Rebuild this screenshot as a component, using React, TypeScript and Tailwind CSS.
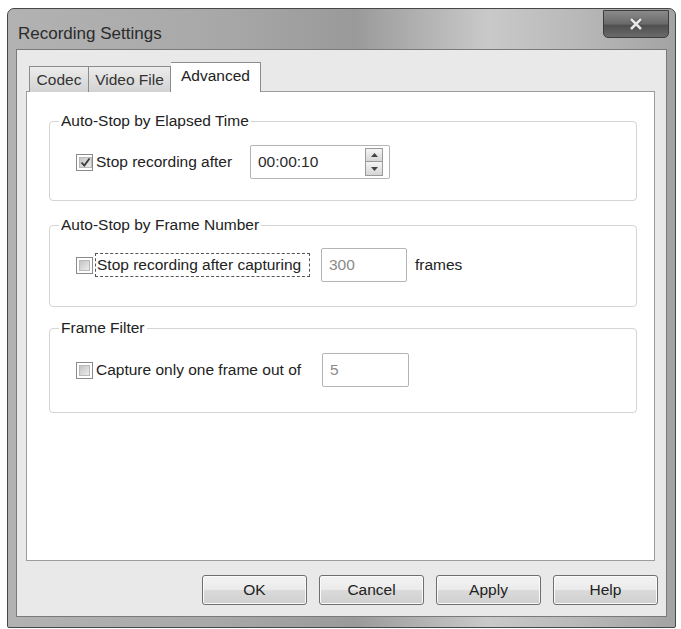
import React from 'react';

const Check: React.FC<{ checked?: boolean }> = ({ checked }) => (
  <span className="w-[17px] h-[17px] shrink-0 border border-[#8a8a8a] bg-white p-[2px] flex">
    <span className="flex-1 border border-[#b9b9b9] bg-[linear-gradient(135deg,#c4c4c4,#ececec)] flex items-center justify-center">
      {checked && (
        <svg width="11" height="11" viewBox="0 0 11 11">
          <path d="M1.5 5.5 L4.3 8.5 L9.5 1.5" fill="none" stroke="#3a3a3a" strokeWidth="1.8" />
        </svg>
      )}
    </span>
  </span>
);

const TextBox: React.FC<{ value: string; w: string; dim?: boolean; spin?: boolean }> = ({ value, w, dim, spin }) => (
  <div className={`${w} h-[34px] border border-[#b4b4b4] rounded-[2px] bg-white flex items-center pl-[7px] pr-[6px]`}>
    <span className={`flex-1 ${dim ? 'text-[#8a8a8a]' : 'text-[#2a2a2a]'}`}>{value}</span>
    {spin && (
      <div className="flex flex-col w-[18px]">
        <span className="h-[14px] border border-[#9a9a9a] bg-[linear-gradient(#f4f4f4,#d6d6d6)] flex items-center justify-center">
          <svg width="7" height="4" viewBox="0 0 7 4"><path d="M0 4 L3.5 0 L7 4Z" fill="#444" /></svg>
        </span>
        <span className="h-[14px] border border-t-0 border-[#9a9a9a] bg-[linear-gradient(#f4f4f4,#d6d6d6)] flex items-center justify-center">
          <svg width="7" height="4" viewBox="0 0 7 4"><path d="M0 0 L3.5 4 L7 0Z" fill="#444" /></svg>
        </span>
      </div>
    )}
  </div>
);

const Group: React.FC<{ title: string; className: string; children: React.ReactNode }> = ({ title, className, children }) => (
  <fieldset className={`w-[588px] ml-[22px] border border-[#d4d4d4] rounded-[4px] ${className}`}>
    <legend className="ml-[9px] px-[2px] leading-[18px] text-[#222]">{title}</legend>
    {children}
  </fieldset>
);

const Button: React.FC<{ label: string }> = ({ label }) => (
  <button className="w-[105px] h-[30px] rounded-[3px] border border-[#6f6f6f] bg-[linear-gradient(#f3f3f3_0%,#ebebeb_48%,#dadada_52%,#cfcfcf_100%)] shadow-[inset_0_0_0_1px_#fafafa] text-[#222]">
    {label}
  </button>
);

export default function App() {
  return (
    <div className="w-[681px] h-[629px] bg-white overflow-hidden font-['Liberation_Sans',Arial,sans-serif] text-[15.5px] text-[#222]">
      <div className="ml-[7px] mt-[8px] w-[669px] h-[620px] border border-[#474747] rounded-t-[7px] rounded-b-[2px] bg-[linear-gradient(to_right,#b2b2b2_0%,#a9a9a9_30%,#9a9a9a_52%,#c9c9c9_72%,#b9b9b9_85%,#a3a3a3_100%)] flex flex-col">
        {/* title bar */}
        <div className="h-[40px] flex items-start justify-between shrink-0">
          <span className="pl-[10px] pt-[16px] text-[17px] leading-[18px] text-[#2b2b2b]">Recording Settings</span>
          <div className="mt-[1px] mr-[6px] w-[66px] h-[28px] rounded-b-[5px] border border-[#3d3d3d] bg-[linear-gradient(#8a8a8a,#6a6a6a_50%,#4f4f4f_55%,#6a6a6a)] flex items-center justify-center">
            <svg width="14" height="12" viewBox="0 0 14 12">
              <path d="M2 1 L12 11 M12 1 L2 11" stroke="#4a4a4a" strokeWidth="4.2" />
              <path d="M2 1 L12 11 M12 1 L2 11" stroke="#e6e6e6" strokeWidth="2.6" />
            </svg>
          </div>
        </div>

        {/* client area */}
        <div className="mx-[8px] h-[568px] border border-[#7a7a7a] bg-[#e9e9e9] flex flex-col">
          <div className="ml-[9px] mt-[12px] w-[629px]">
            {/* tabs */}
            <div className="flex items-end pl-[3px] h-[30px] -mb-px relative z-10">
              <div className="w-[60px] h-[26px] border border-[#8c8c8c] border-b-0 bg-[linear-gradient(#ececec,#d2d2d2)] flex items-center justify-center text-[#333]">Codec</div>
              <div className="w-[82px] h-[26px] border border-l-0 border-[#8c8c8c] border-b-0 bg-[linear-gradient(#ececec,#d2d2d2)] flex items-center justify-center text-[#333]">Video File</div>
              <div className="w-[90px] h-[30px] border border-l-0 border-[#8c8c8c] border-b-0 bg-white flex items-center justify-center pb-[4px]">Advanced</div>
            </div>
            {/* panel */}
            <div className="h-[470px] border border-[#9c9c9c] bg-white flex flex-col">
              <Group title="Auto-Stop by Elapsed Time" className="mt-[20px] pt-[15px] pb-[21px]">
                <div className="flex items-center h-[34px] pl-[26px]">
                  <Check checked />
                  <span className="ml-[3px] w-[154px]">Stop recording after</span>
                  <TextBox value="00:00:10" w="w-[140px]" spin />
                </div>
              </Group>

              <Group title="Auto-Stop by Frame Number" className="mt-[15px] pt-[14px] pb-[24px]">
                <div className="flex items-center h-[34px] pl-[26px]">
                  <Check />
                  <span className="ml-[2px] w-[215px] h-[24px] flex items-center border border-dashed border-[#555] px-[1px]">Stop recording after capturing</span>
                  <span className="w-[11px]" />
                  <TextBox value="300" w="w-[86px]" dim />
                  <span className="ml-[8px]">frames</span>
                </div>
              </Group>

              <Group title="Frame Filter" className="mt-[12px] pt-[16px] pb-[25px]">
                <div className="flex items-center h-[34px] pl-[26px]">
                  <Check />
                  <span className="ml-[3px] w-[226px]">Capture only one frame out of</span>
                  <TextBox value="5" w="w-[87px]" dim />
                </div>
              </Group>
            </div>
          </div>

          {/* buttons */}
          <div className="mt-[14px] mr-[8px] flex justify-end gap-[12px]">
            <Button label="OK" />
            <Button label="Cancel" />
            <Button label="Apply" />
            <Button label="Help" />
          </div>
        </div>
      </div>
    </div>
  );
}
